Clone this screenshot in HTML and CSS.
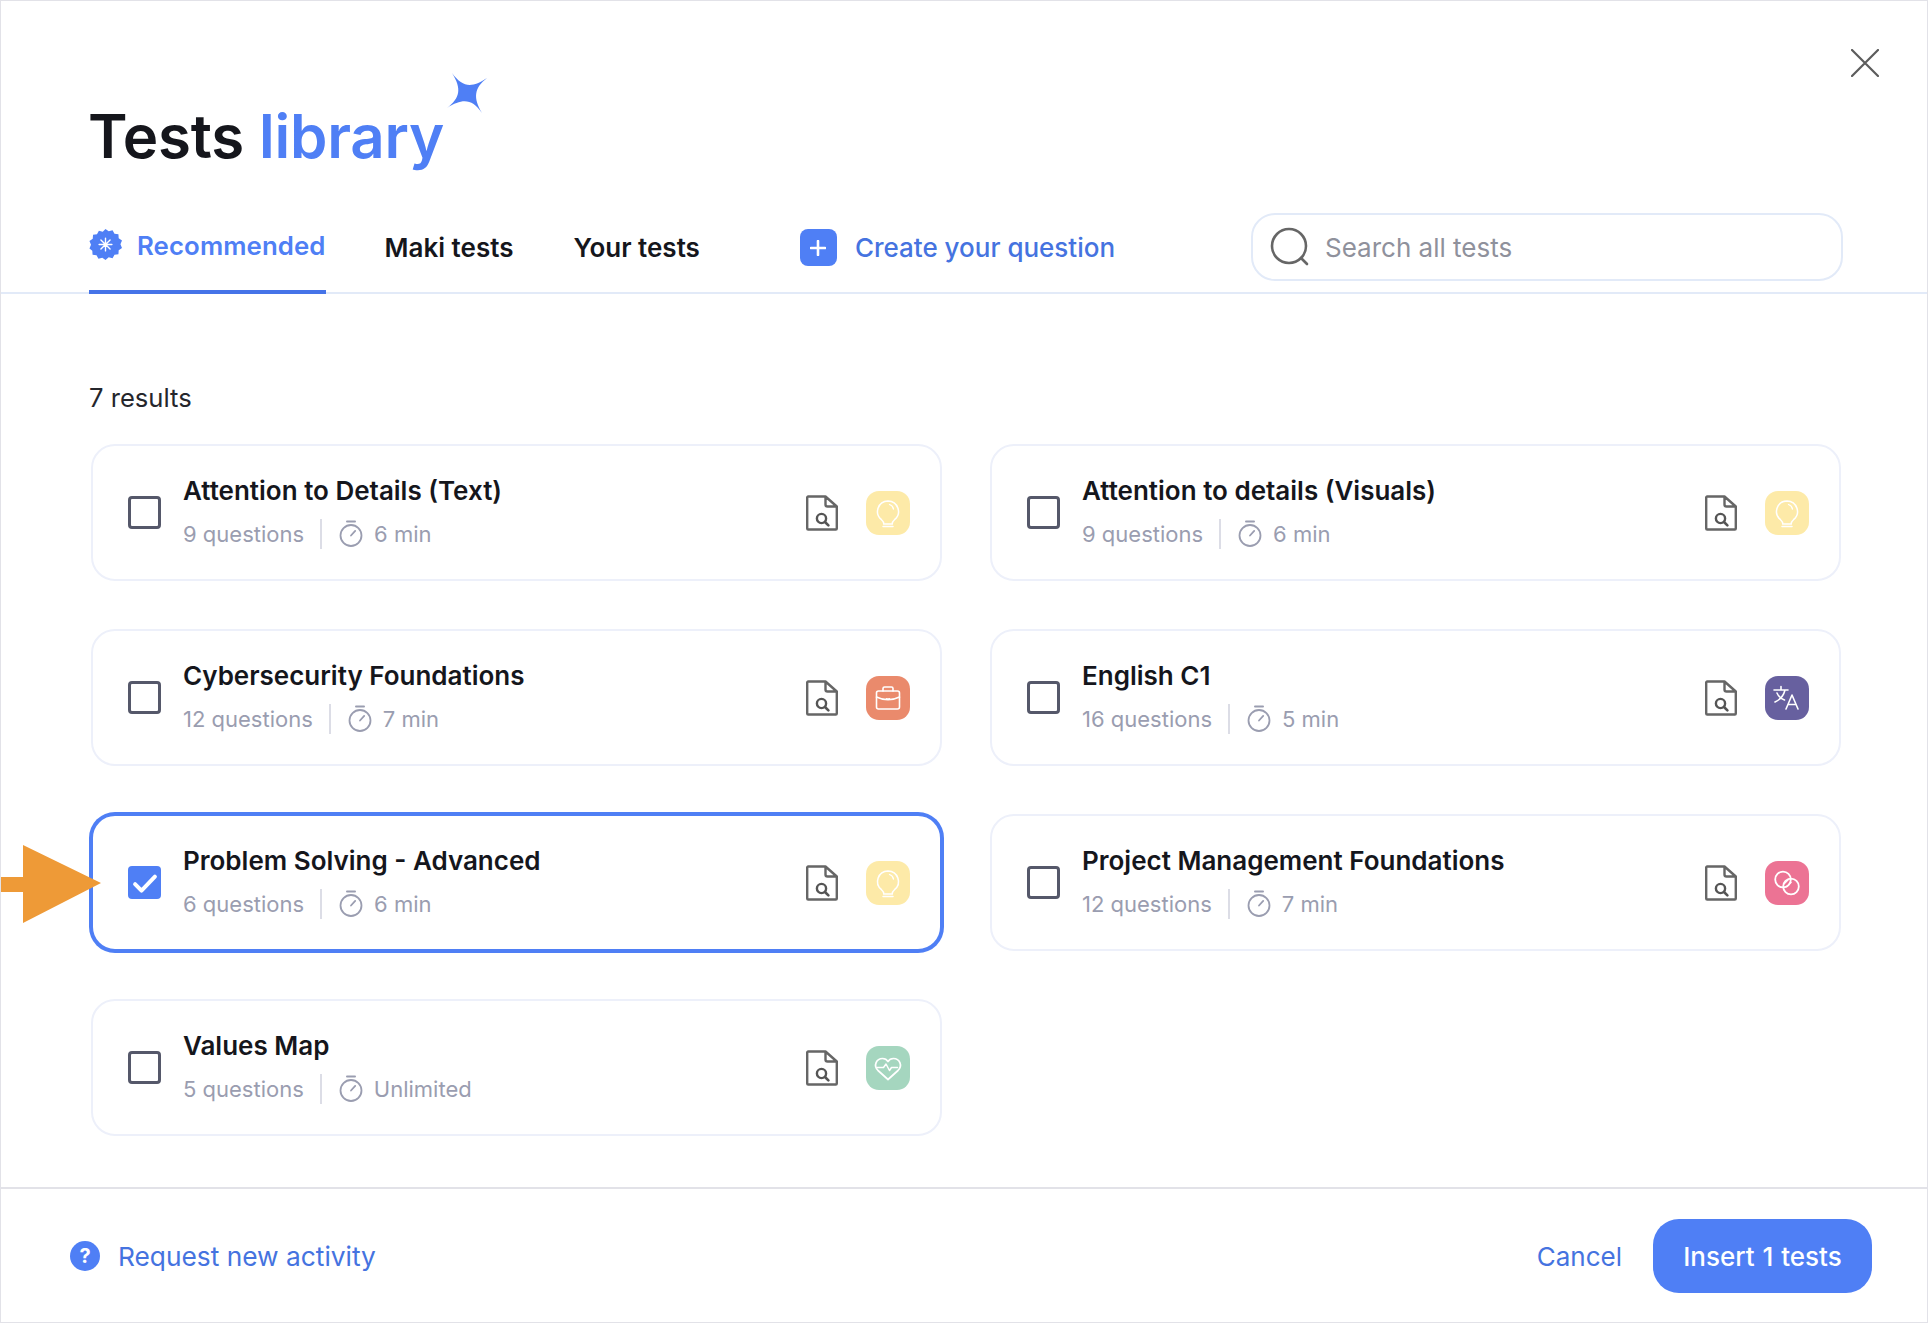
FILE: index.html
```html
<!DOCTYPE html>
<html lang="en">
<head>
<meta charset="utf-8">
<title>Tests library</title>
<link rel="stylesheet" href="styles.css">
</head>
<body>
<svg width="0" height="0" class="defs">
  <defs>
    <symbol id="doc" viewBox="0 0 32 36"><path d="M19.500 1.500H2.200a1 1 0 0 0-1 1v31a1 1 0 0 0 1 1h27.600a1 1 0 0 0 1-1V11.500zM19.500 1.500v8a2 2 0 0 0 2 2h9.300" fill="none" stroke="#666" stroke-width="2.400" stroke-linejoin="round"/><circle cx="15.500" cy="23.500" r="4.600" fill="none" stroke="#555" stroke-width="2.400"/><path d="M19 27l3.400 3.400" stroke="#555" stroke-width="2.600" stroke-linecap="round"/></symbol>
    <symbol id="timer" viewBox="0 0 24 28"><path d="M8 1.500h8" stroke="#9a9db0" stroke-width="2" stroke-linecap="round"/><circle cx="12" cy="15.500" r="10.500" fill="none" stroke="#9a9db0" stroke-width="1.800"/><path d="M12 15.500l4.200-4.600" stroke="#9a9db0" stroke-width="1.800" stroke-linecap="round"/></symbol>
    <symbol id="bulb" viewBox="0 0 44 44"><path d="M22 10a10.500 10.500 0 0 0-6.500 18.700c1.500 1.300 2.300 2.600 2.300 4.300h8.400c0-1.700.8-3 2.300-4.300A10.500 10.500 0 0 0 22 10z" fill="none" stroke="#fff" stroke-width="1.500"/><path d="M17 35.500h10" stroke="#fff" stroke-width="1.500" stroke-linecap="round"/><path d="M23.500 13.500a6 6 0 0 1 4 4.500" fill="none" stroke="#fff" stroke-width="1.300" stroke-linecap="round"/></symbol>
  </defs>
</svg>
<div class="modal">
  <svg class="arrow" viewBox="0 0 100 78" width="100" height="78"><path d="M0 32h22V0l78 38-78 40V47H0z" fill="#ee9a37"/></svg>
  <header class="head">
    <h1 class="title">Tests <span class="accent">library</span><svg class="star" viewBox="0 0 40 40" width="40" height="40"><path d="M5 0C16 15 25 15 40 5 27 15 26 25 35 40 25 26 16 25 0 35 13 25 15 16 5 0z" fill="#4f7ff5"/></svg></h1>
    <button class="close" aria-label="Close"><svg viewBox="0 0 28 28" width="28" height="28"><path d="M1 1l26 26M27 1 1 27" stroke="#5c5c5c" stroke-width="2.200" stroke-linecap="round"/></svg></button>
  </header>
  <nav class="tabs">
    <a class="tab active">
      <svg class="badge" viewBox="-1 -1 36 36" width="33" height="33"><path d="M17 0l3.500 2.600 4.200-1.200 2.100 3.800 4.300.6.300 4.400 3.600 2.500-1.700 4 1.700 4-3.600 2.500-.3 4.400-4.300.6-2.100 3.800-4.200-1.200L17 34l-3.500-2.600-4.200 1.200-2.100-3.800-4.300-.6-.3-4.400L-.5 21.300l1.700-4-1.700-4 3.600-2.500.3-4.400 4.300-.6 2.100-3.800 4.200 1.200z" fill="#4f7ff5"/><path d="M17 10v14M10 17h14M12 12l10 10M22 12 12 22" stroke="#fff" stroke-width="1.500" stroke-linecap="round"/></svg>
      Recommended
    </a>
    <a class="tab">Maki tests</a>
    <a class="tab">Your tests</a>
    <a class="create"><span class="plus"><svg viewBox="0 0 16 16" width="16" height="16"><path d="M8 1v14M1 8h14" stroke="#fff" stroke-width="2.600" stroke-linecap="round"/></svg></span>Create your question</a>
    <label class="search">
      <svg viewBox="0 0 40 40" width="40" height="40"><circle cx="19" cy="19" r="17" fill="none" stroke="#666" stroke-width="2.600"/><path d="M31 31l6 6" stroke="#666" stroke-width="2.600" stroke-linecap="round"/></svg>
      <span class="placeholder">Search all tests</span>
    </label>
  </nav>
  <main class="body">
    <p class="count">7 results</p>
    <div class="grid">
      <article class="card">
        <span class="check"></span>
        <div class="info"><h2>Attention to Details (Text)</h2><p class="meta"><span>9 questions</span><i class="sep"></i><svg class="tm"><use href="#timer"/></svg><span>6 min</span></p></div>
        <svg class="doc"><use href="#doc"/></svg>
        <span class="type yellow"><svg width="44" height="44"><use href="#bulb"/></svg></span>
      </article>
      <article class="card">
        <span class="check"></span>
        <div class="info"><h2>Attention to details (Visuals)</h2><p class="meta"><span>9 questions</span><i class="sep"></i><svg class="tm"><use href="#timer"/></svg><span>6 min</span></p></div>
        <svg class="doc"><use href="#doc"/></svg>
        <span class="type yellow"><svg width="44" height="44"><use href="#bulb"/></svg></span>
      </article>
      <article class="card">
        <span class="check"></span>
        <div class="info"><h2>Cybersecurity Foundations</h2><p class="meta"><span>12 questions</span><i class="sep"></i><svg class="tm"><use href="#timer"/></svg><span>7 min</span></p></div>
        <svg class="doc"><use href="#doc"/></svg>
        <span class="type orange"><svg viewBox="0 0 44 44" width="44" height="44"><rect x="10.500" y="15" width="23" height="18" rx="2" fill="none" stroke="#fff" stroke-width="1.600"/><path d="M17 15v-2.500a1.500 1.500 0 0 1 1.500-1.500h7a1.500 1.500 0 0 1 1.500 1.500V15M10.500 21c7 3.500 16 3.500 23 0M20.500 23h3" fill="none" stroke="#fff" stroke-width="1.600" stroke-linecap="round"/></svg></span>
      </article>
      <article class="card">
        <span class="check"></span>
        <div class="info"><h2>English C1</h2><p class="meta"><span>16 questions</span><i class="sep"></i><svg class="tm"><use href="#timer"/></svg><span>5 min</span></p></div>
        <svg class="doc"><use href="#doc"/></svg>
        <span class="type purple"><svg viewBox="0 0 44 44" width="44" height="44"><path d="M9 14h14M16 10.500V14M20 14c-1.500 6-5.500 10-10 12M12 17c1.500 3.500 4.500 6 7.500 7M21 33l6-14 6 14M23 28.500h8" fill="none" stroke="#fff" stroke-width="1.600" stroke-linecap="round" stroke-linejoin="round"/></svg></span>
      </article>
      <article class="card selected">
        <span class="check on"><svg viewBox="0 0 24 24" width="28" height="28"><path d="M3.500 13l5.500 5.500L20.500 6.500" fill="none" stroke="#fff" stroke-width="3.400" stroke-linecap="round" stroke-linejoin="round"/></svg></span>
        <div class="info"><h2>Problem Solving - Advanced</h2><p class="meta"><span>6 questions</span><i class="sep"></i><svg class="tm"><use href="#timer"/></svg><span>6 min</span></p></div>
        <svg class="doc"><use href="#doc"/></svg>
        <span class="type yellow"><svg width="44" height="44"><use href="#bulb"/></svg></span>
      </article>
      <article class="card">
        <span class="check"></span>
        <div class="info"><h2>Project Management Foundations</h2><p class="meta"><span>12 questions</span><i class="sep"></i><svg class="tm"><use href="#timer"/></svg><span>7 min</span></p></div>
        <svg class="doc"><use href="#doc"/></svg>
        <span class="type pink"><svg viewBox="0 0 44 44" width="44" height="44"><circle cx="18" cy="18.500" r="7.800" fill="none" stroke="#fff" stroke-width="1.800"/><circle cx="26" cy="25.500" r="7.800" fill="none" stroke="#fff" stroke-width="1.800"/><path d="M18.500 23.500l6-6M21.500 26l5-5" stroke="#fff" stroke-width="1.200"/></svg></span>
      </article>
      <article class="card">
        <span class="check"></span>
        <div class="info"><h2>Values Map</h2><p class="meta"><span>5 questions</span><i class="sep"></i><svg class="tm"><use href="#timer"/></svg><span>Unlimited</span></p></div>
        <svg class="doc"><use href="#doc"/></svg>
        <span class="type green"><svg viewBox="0 0 44 44" width="44" height="44"><path d="M22 33.500 12 24.500c-5-5-1.500-12 4.500-12 2.500 0 4.300 1 5.500 3 1.200-2 3-3 5.500-3 6 0 9.500 7 4.500 12z" fill="none" stroke="#fff" stroke-width="1.700" stroke-linejoin="round"/><path d="M11 21.500h6.500l2.500-3.500 3.500 6.500 2-3h6" fill="none" stroke="#fff" stroke-width="1.500" stroke-linecap="round" stroke-linejoin="round"/></svg></span>
      </article>
    </div>
  </main>
  <footer class="foot">
    <a class="request"><span class="help">?</span><span class="foot-label">Request new activity</span></a>
    <div class="actions">
      <a class="cancel">Cancel</a>
      <button class="insert">Insert 1 tests</button>
    </div>
  </footer>
</div>
</body>
</html>
```
FILE: styles.css
```css
* { box-sizing: border-box; }
html, body { margin: 0; padding: 0; background: #fff; }
body { font-family: Inter, "Liberation Sans", sans-serif; color: #15161c; }
.defs { position: absolute; }
.modal {
  position: relative;
  width: 1928px;
  height: 1323px;
  border: 1px solid #e2e2e8;
  display: flex;
  flex-direction: column;
  overflow: hidden;
}
.arrow { position: absolute; left: 0; top: 844px; z-index: 2; }
.head {
  height: 212px;
  padding: 100px 0 0 87px;
  display: flex;
  justify-content: space-between;
  align-items: flex-start;
}
.title {
  position: relative;
  margin: 0;
  font-size: 60px;
  line-height: 70px;
  font-weight: 600;
  letter-spacing: -0.2px;
}
.accent { color: #4f7ff5; }
.star { position: absolute; left: 359px; top: -28px; }
.close {
  margin: -52px 48px 0 0;
  padding: 0;
  border: 0;
  background: none;
  display: flex;
}
.tabs {
  height: 81px;
  padding-left: 88px;
  display: flex;
  align-items: flex-start;
  border-bottom: 2px solid #e2eaf8;
}
.tab {
  height: 81px;
  margin-right: 60px;
  display: flex;
  align-items: flex-start;
  gap: 15px;
  padding-top: 17px;
  font-size: 26px;
  line-height: 36px;
  font-weight: 600;
  color: #15161c;
}
.tab.active {
  color: #4f7ff5;
  font-size: 25.800px;
  letter-spacing: 0.1px;
  border-bottom: 4px solid #4573e8;
  padding-top: 15px;
  margin-right: 59px;
}
.badge { flex: none; }
.create {
  margin-left: 40px;
  margin-top: 16px;
  display: flex;
  align-items: center;
  gap: 18px;
  font-size: 26px;
  line-height: 36px;
  font-weight: 500;
  color: #4573e0;
}
.plus {
  width: 37px;
  height: 37px;
  border-radius: 8px;
  background: #4f7ff5;
  display: flex;
  align-items: center;
  justify-content: center;
}
.search {
  width: 592px;
  height: 68px;
  margin-left: auto;
  margin-right: 84px;
  padding: 0 17px;
  border: 2px solid #e2eaf8;
  border-radius: 24px;
  display: flex;
  align-items: center;
  gap: 15px;
}
.placeholder { font-size: 26px; color: #8f919c; }
.body { flex: 1; padding: 87px 86px 0 90px; }
.count { margin: 0 0 29px -2px; font-size: 25.600px; line-height: 34px; color: #25262c; }
.grid {
  display: grid;
  grid-template-columns: 851px 851px;
  column-gap: 48px;
  row-gap: 48px;
  grid-auto-rows: 137px;
}
.card {
  display: flex;
  align-items: center;
  padding: 0 30px 0 35px;
  border: 2px solid #edf0fa;
  border-radius: 24px;
  background: #fff;
}
.card.selected {
  border-color: #4f7ff5;
  box-shadow: 0 0 0 2px #4f7ff5;
}
.check {
  flex: none;
  width: 33px;
  height: 33px;
  border: 3px solid #55586a;
  border-radius: 4px;
  margin-right: 22px;
  display: flex;
  align-items: center;
  justify-content: center;
}
.check.on { border: 0; background: #4f7ff5; }
.info { flex: 1; min-width: 0; padding-bottom: 3px; }
.info h2 { margin: 0; font-size: 26px; line-height: 36px; font-weight: 600; color: #15161c; }
.meta {
  margin: 10px 0 0;
  display: flex;
  align-items: center;
  font-size: 22px;
  line-height: 30px;
  color: #9a9db0;
}
.sep { width: 2px; height: 30px; background: #dcdde6; margin: 0 17px 0 16px; }
.tm { width: 24px; height: 28px; margin-right: 11px; }
.doc { flex: none; width: 32px; height: 36px; margin-right: 28px; }
.type {
  flex: none;
  width: 44px;
  height: 44px;
  border-radius: 13px;
  display: flex;
  align-items: center;
  justify-content: center;
}
.yellow { background: #fdeaa8; }
.orange { background: #ea8a6c; }
.purple { background: #67609f; }
.pink { background: #ec7394; }
.green { background: #a5d6bf; }
.foot {
  height: 135px;
  flex: none;
  padding: 0 55px 0 69px;
  border-top: 2px solid #e2e2e8;
  display: flex;
  align-items: center;
  justify-content: space-between;
}
.request {
  display: flex;
  align-items: center;
  gap: 18px;
  font-size: 26.300px;
  color: #4573e0;
}
.foot-label { padding-top: 2px; }
.help {
  width: 30px;
  height: 30px;
  border-radius: 50%;
  background: #4f7ff5;
  color: #fff;
  font-size: 20px;
  font-weight: 700;
  display: flex;
  align-items: center;
  justify-content: center;
}
.actions { display: flex; align-items: center; gap: 31px; }
.cancel { font-size: 26px; color: #4573e0; padding-top: 2px; }
.insert {
  width: 219px;
  height: 74px;
  padding: 2px 0 0;
  border: 0;
  border-radius: 26px;
  background: #4f7ff5;
  color: #fff;
  font-family: inherit;
  font-size: 26px;
  font-weight: 500;
  word-spacing: 1px;
}
```
